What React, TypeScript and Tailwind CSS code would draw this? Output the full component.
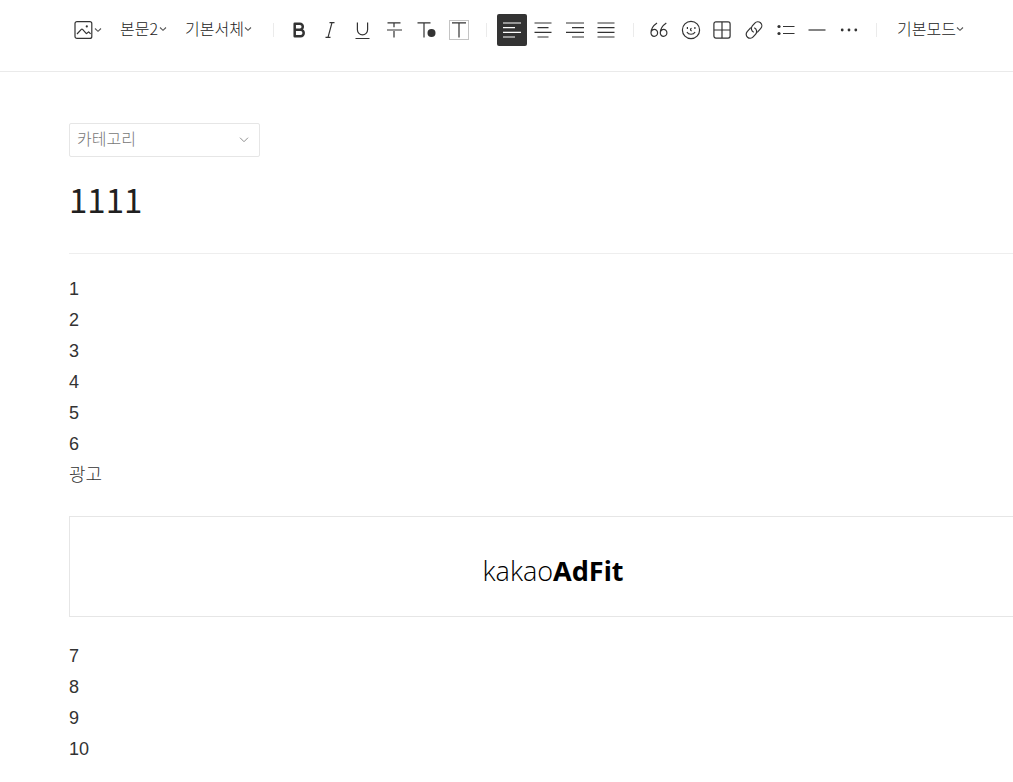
import type { ReactNode } from "react";

const beforeAd = ["1", "2", "3", "4", "5", "6", "광고"];
const afterAd = ["7", "8", "9", "10"];

function Icon({ children }: { children: ReactNode }) {
  return (
    <svg
      className="h-5 w-5"
      viewBox="0 0 20 20"
      fill="none"
      stroke="currentColor"
      strokeWidth="1.2"
      aria-hidden="true"
    >
      {children}
    </svg>
  );
}

function Chevron() {
  return (
    <svg
      className="pointer-events-none h-2 w-2 shrink-0"
      viewBox="0 0 8 8"
      fill="none"
      stroke="#555"
      strokeWidth="1.1"
      aria-hidden="true"
    >
      <path d="M1 2.5 4 5.3 7 2.5" />
    </svg>
  );
}

function Separator() {
  return <div className="mr-2.5 ml-3 h-3.5 w-px shrink-0 bg-[#ebebeb]" />;
}

function ToolButton({
  label,
  active = false,
  children,
}: {
  label: string;
  active?: boolean;
  children: ReactNode;
}) {
  return (
    <button
      type="button"
      aria-label={label}
      aria-pressed={active}
      className={
        active
          ? "flex h-8 w-[30px] items-center justify-center rounded-xs bg-[#333] text-white"
          : "flex h-8 w-[30px] items-center justify-center rounded-xs text-[#333]"
      }
    >
      <Icon>{children}</Icon>
    </button>
  );
}

function ToolSelect({ label, value }: { label: string; value: string }) {
  return (
    <label className="flex items-center">
      <select
        aria-label={label}
        className="h-7 appearance-none bg-transparent pb-0.5 text-base font-light text-[#222] outline-none"
      >
        <option>{value}</option>
      </select>
      <Chevron />
    </label>
  );
}

function Toolbar() {
  return (
    <header className="overflow-hidden border-b border-[#eaeaea] pt-3.5 pb-[25px] pl-[74px]">
      <div className="flex h-8 items-center" role="toolbar">
        <div className="mr-[9px] flex h-8 items-center gap-[18px] pb-[3px]">
          <button type="button" aria-label="첨부" className="flex items-center pt-[3px] text-[#333]">
            <Icon>
              <rect x="1" y="1.6" width="16.8" height="16.8" rx="2" />
              <path d="m3 14 4.3-4.6c.4-.4.9-.4 1.3 0l3.3 3.8c.4.4.8.4 1.2 0l.9-.9c.4-.4.8-.4 1.2 0l1.4 1.5" />
              <circle cx="12.8" cy="6.4" r="1.1" fill="currentColor" stroke="none" />
            </Icon>
            <Chevron />
          </button>
          <ToolSelect label="문단 모양" value="본문2" />
          <ToolSelect label="서체" value="기본서체" />
        </div>

        <Separator />

        <div className="flex w-[190px] shrink-0 justify-between">
          <ToolButton label="굵게">
            <path
              strokeWidth="2.5"
              strokeLinejoin="round"
              d="M5.7 3.7h5.2a2.9 3 0 0 1 0 6H5.7zM5.7 9.7h5.9a3.1 3.3 0 0 1 0 6.6H5.7z"
            />
          </ToolButton>
          <ToolButton label="기울임">
            <path d="M8.5 2.6h5M4.5 17.4h5M11 2.6 7 17.4" />
          </ToolButton>
          <ToolButton label="밑줄">
            <path d="M4.4 2.5v7.3a5 5 0 0 0 10.2 0V2.5M2.5 18.5h14" />
          </ToolButton>
          <ToolButton label="취소선">
            <path d="M2.5 2.8h13M9 2.8v4.4M9 11v6.5M2 10h15" />
          </ToolButton>
          <ToolButton label="글자색">
            <path d="M.5 2.8h13M7 2.8v14.7" />
            <circle cx="14.5" cy="13" r="4" fill="currentColor" stroke="none" />
          </ToolButton>
          <ToolButton label="배경색">
            <rect x=".5" y=".5" width="19" height="19" stroke="#c4c4c4" strokeWidth="1" />
            <path d="M3 2.8h14M10 2.8v14.7" />
          </ToolButton>
        </div>

        <Separator />

        <div className="flex w-[124px] shrink-0 justify-between">
          <ToolButton label="왼쪽 정렬" active>
            <path d="M1 3h18M1 7.7h12M1 12.4h18M1 17h12" />
          </ToolButton>
          <ToolButton label="가운데 정렬">
            <path d="M1.5 3h17M4.5 7.7h11M1.5 12.4h17M4.5 17h11" />
          </ToolButton>
          <ToolButton label="오른쪽 정렬">
            <path d="M1 3h18M7 7.7h12M1 12.4h18M7 17h12" />
          </ToolButton>
          <ToolButton label="양쪽 정렬">
            <path d="M1.5 3h17M1.5 7.7h17M1.5 12.4h17M1.5 17h17" />
          </ToolButton>
        </div>

        <Separator />

        <div className="flex w-[220px] shrink-0 justify-between">
          <ToolButton label="인용">
            <path d="M8 3C4.7 5.3 2 9 2 12.7a3.3 3.5 0 1 0 3.3-3.3c-1.5 0-2.5.8-3.1 2M17.3 3c-3.3 2.3-6 6-6 9.7a3.3 3.5 0 1 0 3.3-3.3c-1.5 0-2.5.8-3.1 2" />
          </ToolButton>
          <ToolButton label="이모티콘">
            <circle cx="10" cy="10" r="8.6" />
            <path d="M6.4 7v2M13.9 7v2M10.6 8.3c-1.3.2-1.7 2.2.1 2.5M5.9 12c1.6 3 6.6 3 8.2 0" />
          </ToolButton>
          <ToolButton label="표">
            <rect x="1.9" y="1.9" width="16.2" height="16.2" rx="2" />
            <path d="M10 2v16M2 10h16" />
          </ToolButton>
          <ToolButton label="링크">
            <g transform="rotate(-48 10 10)">
              <path d="M9.6 6H4.3a4 4 0 0 0 0 8h3.8a4 4 0 0 0 3.7-5.3" />
              <path d="M10.4 14h5.3a4 4 0 0 0 0-8h-3.8a4 4 0 0 0-3.7 5.3" />
            </g>
          </ToolButton>
          <ToolButton label="목록">
            <circle cx="3" cy="6.5" r="1.6" fill="currentColor" stroke="none" />
            <circle cx="3" cy="13.5" r="1.6" fill="currentColor" stroke="none" />
            <path d="M7 6.5h11.5M7 13.5h11.5" />
          </ToolButton>
          <ToolButton label="구분선">
            <path d="M1.5 10h17" />
          </ToolButton>
          <ToolButton label="더보기">
            <g fill="currentColor" stroke="none">
              <circle cx="3.2" cy="10" r="1.4" />
              <circle cx="10" cy="10" r="1.4" />
              <circle cx="16.8" cy="10" r="1.4" />
            </g>
          </ToolButton>
        </div>

        <Separator />

        <div className="flex h-8 items-center pb-[3px] pl-2.5">
          <ToolSelect label="편집 모드" value="기본모드" />
        </div>
      </div>
    </header>
  );
}

function Lines({ items }: { items: string[] }) {
  return (
    <div className="font-['Liberation_Sans','Noto_Sans_CJK_KR',sans-serif] text-lg leading-[31px] font-light text-[#333]">
      {items.map((text) => (
        <p key={text}>{text}</p>
      ))}
    </div>
  );
}

export default function App() {
  return (
    <div className="min-h-screen bg-white font-['Noto_Sans_CJK_KR',sans-serif]">
      <Toolbar />
      <main className="overflow-hidden pt-[51px] pl-[69px]">
        {/* content runs a little past the right edge, like the editor body */}
        <div className="-mr-6">
          <div className="relative h-[34px] w-[191px]">
            <select
              aria-label="카테고리"
              className="h-full w-full appearance-none rounded-xs border border-[#e6e6e6] bg-white px-[7px] pb-1 text-base font-light text-[#777] outline-none"
            >
              <option>카테고리</option>
            </select>
            <svg
              className="pointer-events-none absolute top-3 right-[11px] h-2.5 w-2.5"
              viewBox="0 0 10 10"
              fill="none"
              stroke="#909090"
              aria-hidden="true"
            >
              <path d="m1 2.7 4 4 4-4" />
            </svg>
          </div>

          <div className="border-b border-[#eee] pt-[19px] pb-[29px]">
            <input
              aria-label="제목"
              defaultValue="1111"
              className="block h-12 w-full text-[33px] text-[#202020] outline-none"
            />
          </div>

          <div className="pt-5" role="textbox" aria-label="본문" aria-multiline="true">
            <Lines items={beforeAd} />
            <div className="mt-[25px] mb-6 flex h-[101px] items-center justify-center border border-[#e6e6e6] pt-2.5 text-[27px] text-black">
              <span className="font-['Open_Sans',sans-serif] font-light">kakao</span>
              <span className="font-['Noto_Sans',sans-serif] font-bold">AdFit</span>
            </div>
            <Lines items={afterAd} />
          </div>
        </div>
      </main>
    </div>
  );
}
